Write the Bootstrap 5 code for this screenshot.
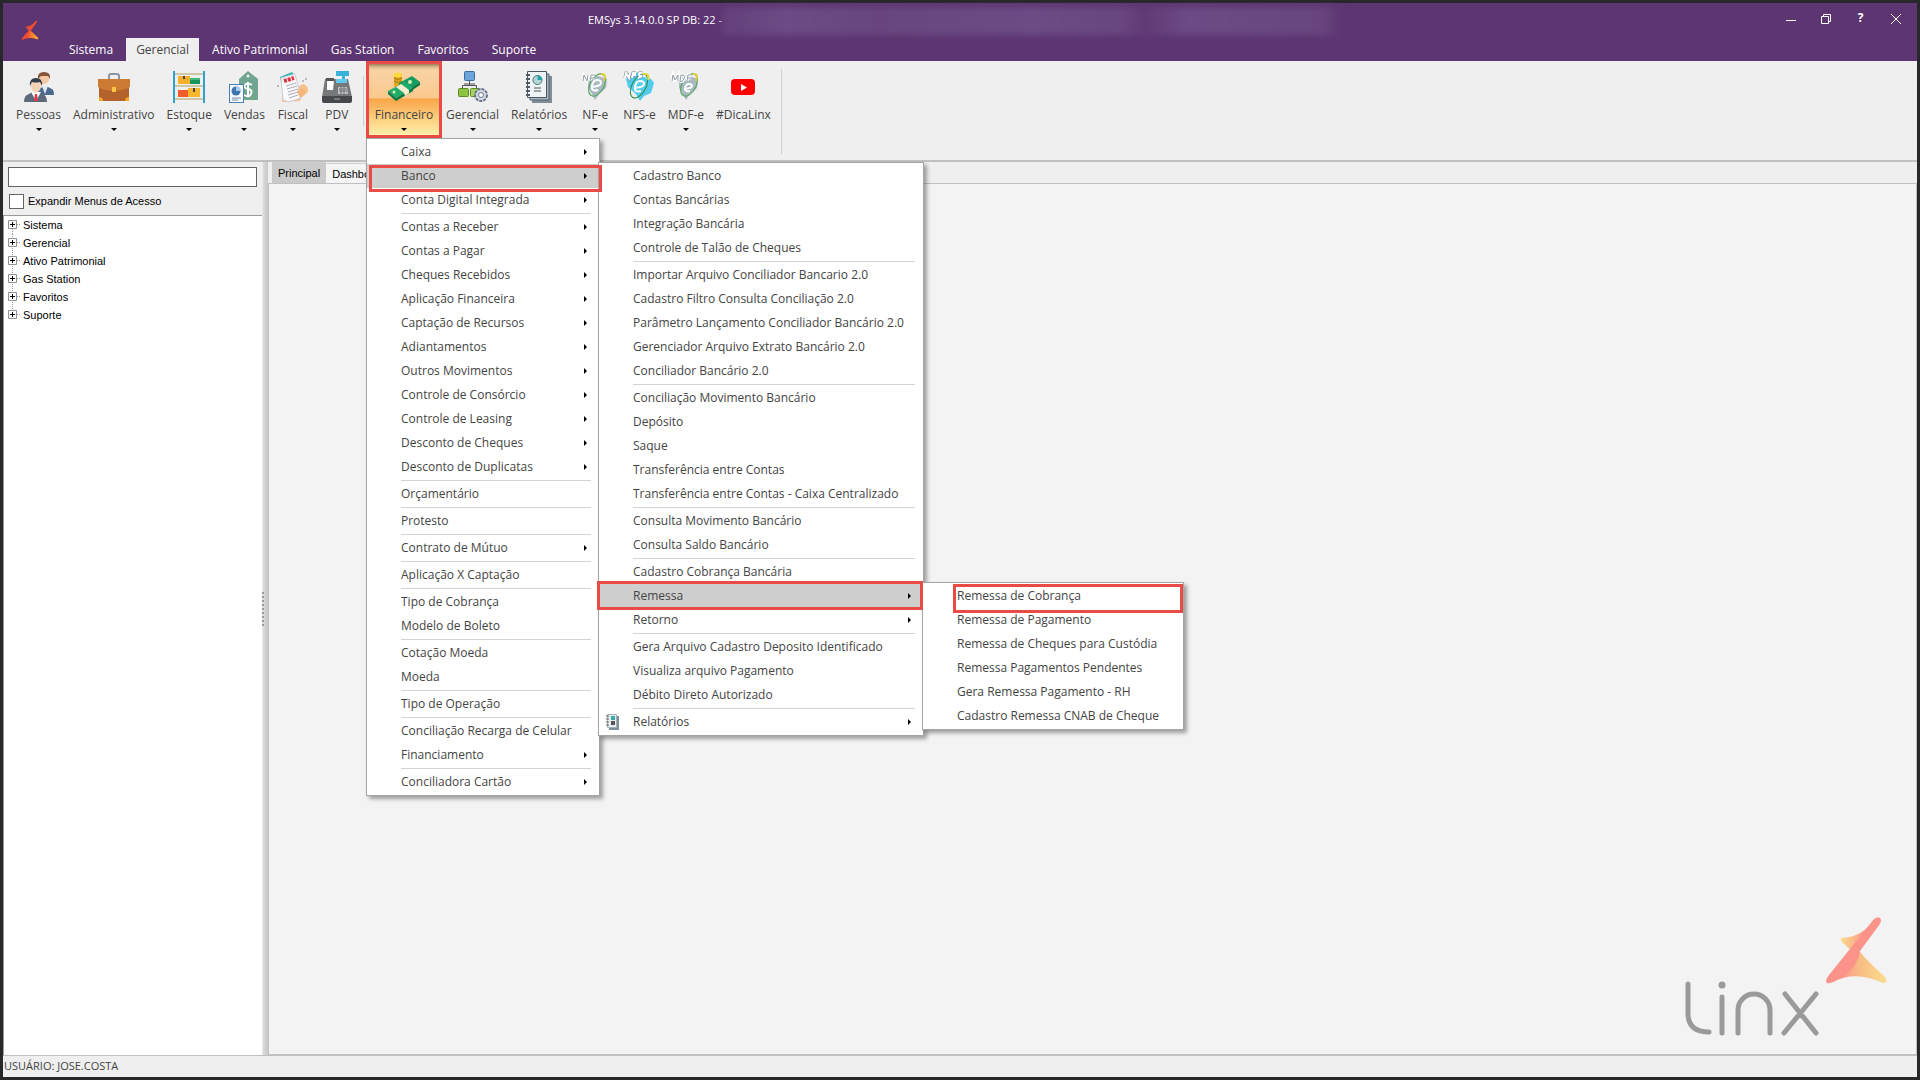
<!DOCTYPE html>
<html lang="pt-BR">
<head>
<meta charset="utf-8">
<meta name="viewport" content="width=device-width, initial-scale=1">
<title>EMSys 3.14.0.0</title>
<link href="https://cdn.jsdelivr.net/npm/bootstrap@5.3.0/dist/css/bootstrap.min.css" rel="stylesheet">
<style>
  :root { --purple: #5c3572; --ribbon: #efefef; --edge: #c0c0c0; --ink: #444; --alert: #ea4b45; }
  body { background: #262829; font-family: "Open Sans", "Noto Sans", sans-serif; font-size: 12px; line-height: 16px; color: var(--ink); padding: 3px; }
  button { font-family: inherit; }
  .app-window { background: var(--ribbon); }
  .title-area { background: var(--purple); height: 58px; color: #fff; }
  .brand-cell { width: 56px; padding: 17px 0 0 18px; }
  .title-line { height: 35px; padding-left: 529px; }
  .title-text { font-size: 11px; padding-top: 9px; }
  .blurred-name { height: 28px; width: 620px; margin-top: 4px; filter: blur(3px); background: linear-gradient(90deg, #65437d, #70508a 10%, #6b4a80 25%, #70518a 50%, #6b4a80 65%, #613c76 68%, #70508a 75%, #6b4a80 97%, #5c3572); opacity: .8; }
  .win-ctl { width: 35px; height: 32px; padding: 0 0 2px; border: 0; background: none; color: #fff; }
  .ribbon-tab { height: 23px; padding: 1px 10px 0; margin-right: 3px; border: 0; background: none; color: #fff; line-height: 22px; font-size: 12px; }
  .ribbon-tab.active { background: var(--ribbon); color: var(--ink); }
  .ribbon { height: 101px; border-bottom: 2px solid var(--edge); padding-left: 7px; }
  .tool { display: flex; flex-direction: column; align-items: center; position: relative; min-width: 40px; height: 75px; padding: 10px 6px 0; border: 0; background: none; color: var(--ink); white-space: nowrap; }
  .tool svg { margin-bottom: 4px; }
  .tool-caret::after { content: ""; margin-top: 5px; border: 3px solid transparent; border-top-color: #000; border-bottom: 0; }
  .tool-active { background: linear-gradient(#a08058 0, #d9b88c 3px, #f8d3a5 6px, #fac98d 48%, #f9a547 49%, #fcc875 72%, #fff0ac 100%); box-shadow: 0 0 0 3px var(--alert); margin: 3px 1px 0; height: 71px; padding-top: 7px; z-index: 2; }
  .tool-split { width: 1px; background: #cfcfcf; }
  .split-short { height: 50px; margin-top: 15px; }
  .split-tall { height: 85px; margin-top: 8px; }
  .side-pane { width: 259px; }
  .search-row { padding: 5px 5px 0; }
  .search-box { display: block; height: 20px; border: 1px solid #646464; border-radius: 0; padding: 0 4px; font-size: 12px; background: #fff; }
  .expand-row { padding: 6px; }
  .small-sans { font-family: "Liberation Sans", Arial, sans-serif; font-size: 11px; color: #000; }
  .expand-check { appearance: none; width: 15px; height: 15px; border: 1px solid #646464; background: #fff; margin: 0; }
  .tree { background: #fff; border-top: 1px solid #9a9a9a; border-left: 1px solid #9a9a9a; padding: 0 0 0 4px; }
  .tree-node { height: 18px; line-height: 18px; }
  .tree-node a { color: #000; text-decoration: none; }
  .splitter { width: 6px; background: linear-gradient(90deg, #efefef, #d6d6d6 30%, #c8c8c8); }
  .grip { width: 2px; height: 34px; background: repeating-linear-gradient(#999 0 2px, transparent 2px 4px); }
  .doc-tab { border: 0; padding: 0 6px; height: 20px; line-height: 16px; background: #f5f5f5; border-top: 1px solid #d0d0d0; margin-top: 1px; }
  .doc-tab.active { background: #cacaca; margin-top: 0; height: 21px; }
  .doc-area { background: #f3f3f3; border: 1px solid var(--edge); }
  .brand-art { margin: 0 28px 18px 0; }
  .status-line { height: 22px; border-top: 1px solid var(--edge); font-size: 11px; line-height: 20px; padding-left: 1px; }
  .cascade { position: absolute; background: #fff; border: 1px solid #a5a5a5; padding: 1px 0; box-shadow: 3px 3px 4px rgba(0,0,0,.35); list-style: none; margin: 0; z-index: 3; }
  .cascade .entry { display: block; position: relative; width: 100%; height: 24px; border: 0; background: none; text-align: left; padding: 0 0 0 34px; line-height: 24px; color: var(--ink); white-space: nowrap; }
  .cascade .open { background: #cecece; }
  .cascade .more::after { content: ""; position: absolute; right: 12px; top: 9px; border: 3px solid transparent; border-left-color: #000; border-right: 0; }
  .cascade .rule { height: 1px; margin: 1px 8px 1px 34px; background: #d4d4d4; }
  .cascade .entry svg { position: absolute; left: 7px; top: 4px; }
  .menu-fin { left: 366px; top: 138px; width: 234px; }
  .menu-bank { left: 598px; top: 162px; width: 326px; }
  .menu-rem { left: 922px; top: 582px; width: 262px; }
  .mark-frame { position: absolute; border: 3px solid var(--alert); z-index: 4; pointer-events: none; }
  .frame-bank { left: 369px; top: 165px; width: 233px; height: 27px; }
  .frame-rem { left: 597px; top: 581px; width: 326px; height: 29px; }
  .frame-cob { left: 953px; top: 584px; width: 230px; height: 29px; }
</style>
</head>
<body class="vh-100 overflow-hidden position-relative">
<div class="app-window h-100 d-flex flex-column">
  <header class="title-area d-flex flex-shrink-0">
    <div class="brand-cell"><svg width="18" height="20" viewBox="0 0 180 200"><defs><linearGradient id="lg1" x1="0" x2="1"><stop offset=".3" stop-color="#ee4a34"/><stop offset="1" stop-color="#fdb92a"/></linearGradient></defs><path d="M60 66Q44 62 50 78L78 104 15 180Q0 205 20 196 80 165 160 192 180 194 168 176L100 110 Z" fill="url(#lg1)"/><path d="M60 66Q100 62 150 8 168 0 160 20L100 105 20 196Q0 200 10 182L90 94Z" fill="#ee4a34"/></svg></div>
    <div class="flex-grow-1 d-flex flex-column">
      <div class="title-line d-flex">
        <span class="title-text flex-shrink-0">EMSys 3.14.0.0 SP DB: 22 -</span>
        <span class="blurred-name"></span>
        <div class="ms-auto me-1 d-flex">
          <button class="win-ctl" aria-label="Minimizar"><svg width="12" height="12"><path d="M1 7.500h10" stroke="#fff"/></svg></button>
          <button class="win-ctl" aria-label="Restaurar"><svg width="12" height="12" fill="none" stroke="#fff"><path d="M1.500 3.500h7v7h-7zM3.500 3.500v-2h7v7h-2"/></svg></button>
          <button class="win-ctl fw-bold" aria-label="Ajuda">?</button>
          <button class="win-ctl" aria-label="Fechar"><svg width="12" height="12"><path d="M1 1l10 10M11 1L1 11" stroke="#fff"/></svg></button>
        </div>
      </div>
      <nav class="d-flex">
        <button class="ribbon-tab">Sistema</button><button class="ribbon-tab active">Gerencial</button><button class="ribbon-tab">Ativo Patrimonial</button><button class="ribbon-tab">Gas Station</button><button class="ribbon-tab">Favoritos</button><button class="ribbon-tab">Suporte</button>
      </nav>
    </div>
  </header>

  <div class="ribbon d-flex flex-shrink-0 align-items-start">
    <button class="tool tool-caret"><svg width="32" height="32" viewBox="0 0 32 32"><path d="M14 24q0-7 6-8l3-1 6 3q2 1 2 6z" fill="#4c6a8d"/><path d="M19 15l3 8 3-8z" fill="#dfeaf4"/><circle cx="21" cy="8" r="5" fill="#f2c9a2"/><path d="M15 8q-1-7 6-7t6 7l-2-3h-7z" fill="#84543b"/><path d="M1 31q0-7 5-8l3-2h7l4 2q4 2 4 8z" fill="#5d6a7b"/><path d="M8 21l5 9 5-9z" fill="#fff"/><path d="M12 23h2l1 7h-4z" fill="#e13a49"/><ellipse cx="13" cy="15" rx="5" ry="6.500" fill="#f6d3b5"/><path d="M7 15q-1-8 6-8t6 8l-2-4q-5 1-8 0z" fill="#38404f"/></svg>Pessoas</button>
    <button class="tool tool-caret"><svg width="34" height="32" viewBox="0 0 34 32"><path d="M12 8V5q0-2 2-2h6q2 0 2 2v3" fill="none" stroke="#8796a5" stroke-width="2"/><rect x="2" y="9" width="30" height="21" rx="1" fill="#b2622a"/><path d="M1 8h32v8q-7 4-16 4T1 16z" fill="#cd7a32"/><rect x="15" y="16" width="4" height="5" fill="#fcc33e"/><path d="M2 26q4 0 4 4H2zM32 26q-4 0-4 4h4z" fill="#f7a823"/></svg>Administrativo</button>
    <button class="tool tool-caret"><svg width="32" height="32" viewBox="0 0 32 32"><path d="M2 2h28v2H2zM2 14h28v2H2zM2 27h28v2H2z" fill="#cfc6a6"/><path d="M0 0h2v32H0zM30 0h2v32h-2z" fill="#2fa2cf"/><path d="M5 5h6v8H5zM11 5h6v8h-6z" fill="#fbb02b"/><path d="M10 5h2v3h-2z" fill="#444"/><path d="M17 7h10v6H17z" fill="#18935a"/><path d="M17 7h10v2H17z" fill="#3eb77b"/><path d="M5 19h10v7H5z" fill="#f25d29"/><path d="M15 17h12v9H15z" fill="#fbb72c"/><path d="M20 17h2v4h-2z" fill="#444"/></svg>Estoque</button>
    <button class="tool tool-caret"><svg width="32" height="32" viewBox="0 0 32 32"><path d="M11 8l9-8 10 8v20q0 1-1 1H11z" fill="#70a58f"/><circle cx="20" cy="5" r="1.500" fill="#eef"/><path d="M24 14q-5-3-7 0t3 4 3 5-7 1M20 11v15" fill="none" stroke="#fff" stroke-width="2"/><rect x="1.500" y="13.500" width="14" height="18" fill="#f5faff" stroke="#4b80b4"/><circle cx="8" cy="20" r="4.500" fill="#3d75af"/><path d="M8 20v-5a5 5 0 0 1 5 5z" fill="#a7c9e6"/><path d="M4 27h9M4 29h6" stroke="#789"/></svg>Vendas</button>
    <button class="tool tool-caret"><svg width="32" height="32" viewBox="0 0 32 32"><path d="M3 6l12-5 4 5-12 20z" fill="#38b8ae"/><path d="M5 31l0-8 16-7 5-3q6 2 5 8l-7 6-1 3z" fill="#f7c08a"/><path d="M4 7l14-4 6 24-12 4-6-2z" fill="#fafafa" stroke="#ccd"/><path d="M7 10l10-3" stroke="#dc3345" stroke-width="4" stroke-dasharray="3 1"/><path d="M9 15l10-3M10 18l10-3M11 21l10-3M11 24l10-3M12 27l9-3" stroke="#aab"/><path d="M20 20q3-3 6-2t2 5l-5 4z" fill="#f3b57c"/><path d="M0 15h2M25 10h2M28 8h2" stroke="#888"/></svg>Fiscal</button>
    <button class="tool tool-caret"><svg width="32" height="32" viewBox="0 0 32 32"><path d="M15 0h13v5h-4v3h-3V5h-6z" fill="#39b1d8"/><path d="M4 8h23l4 18H1z" fill="#77787a"/><path d="M15 8h11v4H15z" fill="#62c9ee"/><path d="M6 9h7l-1 10H6z" fill="#fff"/><path d="M5 7h8v3H5z" fill="#555"/><path d="M17 16h9l1 7H17z" fill="#bfc2c4"/><path d="M18 18h8M18 20h8M20 16v7M23 16v7" stroke="#737577"/><path d="M1 25h30v5q0 2-2 2H3q-2 0-2-2z" fill="#47484b"/><path d="M13 28h6" stroke="#aaa"/></svg>PDV</button>
    <span class="tool-split split-short mx-1"></span>
    <button class="tool tool-caret tool-active"><svg width="34" height="32" viewBox="0 0 34 32"><path d="M7 4v11q4 3 8 0V4z" fill="#e0a51d"/><ellipse cx="11" cy="4" rx="4.500" ry="2.500" fill="#ffd83d"/><path d="M7 7q4 3 8 0M7 10q4 3 8 0" fill="none" stroke="#a77910"/><path d="M12 12L25 5l8 6-12 8z" fill="#159d61"/><path d="M12 12l9 7v3l-9-7zM33 11l-12 8v3l12-8z" fill="#087748"/><path d="M1 20l17-9 8 6-17 10z" fill="#20ad6c"/><path d="M1 20l8 7v3l-8-7zM26 17L9 27v3l17-10z" fill="#087748"/><path d="M9 16l5-3 8 6v3l-4 3-1-3z" fill="#f8edce"/><circle cx="7" cy="21" r="1.500" fill="#d8f0b5"/><circle cx="23" cy="11" r="2" fill="#d8f0b5"/></svg>Financeiro</button>
    <button class="tool tool-caret"><svg width="32" height="32" viewBox="0 0 32 32"><rect x="7.500" y=".5" width="10" height="9" rx="1" fill="#6da4dc" stroke="#3c6d9f"/><path d="M12.500 10v5M5.500 17v-2.500h14V17M7 13h11" fill="none" stroke="#555"/><rect x="1.500" y="17.500" width="10" height="8" rx="1" fill="#8bc342" stroke="#5d8d22"/><rect x="13.500" y="17.500" width="9" height="8" rx="1" fill="#a9d35f" stroke="#5d8d22"/><circle cx="24" cy="24" r="6" fill="#d5dae5" stroke="#69738a" stroke-width="2" stroke-dasharray="3 1"/><circle cx="24" cy="24" r="2.500" fill="#fff" stroke="#69738a"/></svg>Gerencial</button>
    <button class="tool tool-caret"><svg width="32" height="32" viewBox="0 0 32 32"><path d="M9 5h20v27H9z" fill="#7f8e99"/><path d="M7 3h19v26H7z" fill="#a8b5bf" stroke="#52606b"/><path d="M4.500.5h19v26h-19z" fill="#edf2f5" stroke="#4b565e"/><circle cx="14.500" cy="9" r="4.500" fill="#b8d6d4" stroke="#44777b"/><path d="M14.500 9V4.500A4.500 4.500 0 0 1 19 9z" fill="#1ea3ab"/><path d="M11 17h7M11 20h7" stroke="#555"/><path d="M3 4h4M3 8h4M3 12h4M3 16h4M3 20h4M3 24h4" stroke="#4f5a62" stroke-width="2"/></svg>Relatórios</button>
    <button class="tool tool-caret"><svg width="32" height="32" viewBox="0 0 32 32"><path d="M9 9l7-5 12 4-1 9-7 6-4 6-3-6-4-6z" fill="#a9b9c2"/><ellipse cx="18" cy="14" rx="7" ry="12" transform="rotate(28 18 14)" fill="none" stroke="#4ca34b"/><path d="M22 3q6-1 3 7" fill="none" stroke="#e2ce3b" stroke-width="2"/><path d="M13 16q9-1 9-4t-4-3-5 6 6 4" fill="none" stroke="#fff" stroke-width="2"/><path d="M4 10l1-6 3 6 1-6M11 10l1-6h4M12 7h3" fill="none" stroke="#fff" stroke-width="3"/><path d="M4 10l1-6 3 6 1-6M11 10l1-6h4M12 7h3" fill="none" stroke="#8e9ba5"/></svg>NF-e</button>
    <button class="tool tool-caret"><svg width="32" height="32" viewBox="0 0 32 32"><path d="M3 8L14 1l6 5 8 2 3 4-3 10-7 3-4 5-4-7-8-7z" fill="#52cbed"/><ellipse cx="16" cy="15" rx="7" ry="13" transform="rotate(28 16 15)" fill="none" stroke="#268a42"/><path d="M20 3q7-1 5 6" fill="none" stroke="#e2db3b" stroke-width="2"/><path d="M12 17q9-1 9-4t-4-3-5 6 6 4" fill="none" stroke="#fff" stroke-width="2"/><path d="M2 7l1-5 3 5 1-5M9 7l1-5h3M10 4h3M19 2q-3-1-3 1t2 2-3 2" fill="none" stroke="#789" stroke-width="3"/><path d="M2 7l1-5 3 5 1-5M9 7l1-5h3M10 4h3M19 2q-3-1-3 1t2 2-3 2" fill="none" stroke="#fff" stroke-width="2"/></svg>NFS-e</button>
    <button class="tool tool-caret"><svg width="32" height="32" viewBox="0 0 32 32"><path d="M9 9l7-5 12 4-1 9-7 6-4 6-3-6-4-6z" fill="#a9b9c2"/><ellipse cx="19" cy="14" rx="7" ry="12" transform="rotate(28 19 14)" fill="none" stroke="#4ca34b"/><path d="M23 3q6-1 3 7" fill="none" stroke="#e2ce3b" stroke-width="2"/><path d="M15 18q7-1 7-3t-3-2-4 4 5 3" fill="none" stroke="#fff" stroke-width="2"/><path d="M2 10l1-6 2 5 3-5v6M10 10l1-6q5 0 3 4t-4 2M17 10l1-6h3M18 7h3" fill="none" stroke="#fff" stroke-width="3"/><path d="M2 10l1-6 2 5 3-5v6M10 10l1-6q5 0 3 4t-4 2M17 10l1-6h3M18 7h3" fill="none" stroke="#8e9ba5"/></svg>MDF-e</button>
    <button class="tool"><svg width="32" height="32" viewBox="0 0 32 32"><rect x="4" y="8" width="24" height="16" rx="4" fill="#f00"/><path d="M14 13l6 3.500-6 3.500z" fill="#fff"/></svg>#DicaLinx</button>
    <span class="tool-split split-tall ms-1"></span>
  </div>

  <main class="flex-grow-1 d-flex">
    <aside class="side-pane d-flex flex-column flex-shrink-0">
      <div class="search-row"><input class="search-box w-100" aria-label="Buscar"></div>
      <div class="expand-row d-flex align-items-center small-sans"><input type="checkbox" class="expand-check" id="expandir"><label for="expandir" class="ms-1">Expandir Menus de Acesso</label></div>
      <div class="tree small-sans flex-grow-1">
        <div class="tree-node d-flex"><svg width="15" height="18" fill="none"><path d="M4.500 13v5M9 8.500h4" stroke="#999" stroke-dasharray="1 1"/><path d="M.5 4.500h8v8h-8z" stroke="#919191"/><path d="M2 8.500h5M4.500 6v5" stroke="#000"/></svg><a href="#">Sistema</a></div>
        <div class="tree-node d-flex"><svg width="15" height="18" fill="none"><path d="M4.500 0v18M9 8.500h4" stroke="#999" stroke-dasharray="1 1"/><path d="M.5 4.500h8v8h-8z" stroke="#919191" fill="#fff"/><path d="M2 8.500h5M4.500 6v5" stroke="#000"/></svg><a href="#">Gerencial</a></div>
        <div class="tree-node d-flex"><svg width="15" height="18" fill="none"><path d="M4.500 0v18M9 8.500h4" stroke="#999" stroke-dasharray="1 1"/><path d="M.5 4.500h8v8h-8z" stroke="#919191" fill="#fff"/><path d="M2 8.500h5M4.500 6v5" stroke="#000"/></svg><a href="#">Ativo Patrimonial</a></div>
        <div class="tree-node d-flex"><svg width="15" height="18" fill="none"><path d="M4.500 0v18M9 8.500h4" stroke="#999" stroke-dasharray="1 1"/><path d="M.5 4.500h8v8h-8z" stroke="#919191" fill="#fff"/><path d="M2 8.500h5M4.500 6v5" stroke="#000"/></svg><a href="#">Gas Station</a></div>
        <div class="tree-node d-flex"><svg width="15" height="18" fill="none"><path d="M4.500 0v18M9 8.500h4" stroke="#999" stroke-dasharray="1 1"/><path d="M.5 4.500h8v8h-8z" stroke="#919191" fill="#fff"/><path d="M2 8.500h5M4.500 6v5" stroke="#000"/></svg><a href="#">Favoritos</a></div>
        <div class="tree-node d-flex"><svg width="15" height="18" fill="none"><path d="M4.500 0v5M9 8.500h4" stroke="#999" stroke-dasharray="1 1"/><path d="M.5 4.500h8v8h-8z" stroke="#919191" fill="#fff"/><path d="M2 8.500h5M4.500 6v5" stroke="#000"/></svg><a href="#">Suporte</a></div>
      </div>
    </aside>
    <div class="splitter flex-shrink-0 d-flex align-items-center ps-0"><span class="grip"></span></div>
    <section class="flex-grow-1 d-flex flex-column">
      <div class="d-flex small-sans ps-1"><button class="doc-tab active">Principal</button><button class="doc-tab">Dashboard</button></div>
      <div class="doc-area flex-grow-1 d-flex align-items-end justify-content-end">
        <svg width="204" height="120" viewBox="0 0 204 120" class="brand-art" role="img" aria-label="Linx"><defs><linearGradient id="lg2" x1="0" x2="1"><stop offset=".2" stop-color="#fb938b"/><stop offset=".5" stop-color="#f8bb85"/><stop offset="1" stop-color="#fbdc8c"/></linearGradient><linearGradient id="lg3" x1="0" x2="1"><stop offset="0" stop-color="#fbdc88"/><stop offset=".7" stop-color="#fb998c"/></linearGradient></defs>
          <g fill="none" stroke="#9a9a9a" stroke-width="5" stroke-linecap="round"><path d="M4 68v31q1 17 21 17M38 81v36M54 117V94a16 16 0 0 1 32 0v23M101 78l31 39M132 78l-32 39"/></g><circle cx="38" cy="69" r="3.500" fill="#9a9a9a"/>
          <path d="M146 66L174 33q4 7 27 28 4 6-2 6-28-13-50-1z" fill="url(#lg2)"/><path d="M158 22q18-1 30-15l2 4-20 26-11-10q-4-5-1-5z" fill="url(#lg3)"/><path d="M190 3q6-4 7 1 0 3-4 8L176 35q-3 20-27 31-7 3-7-1 0-2 3-6z" fill="#fb938b"/></svg>
      </div>
    </section>
  </main>
  <footer class="status-line flex-shrink-0">USUÁRIO: JOSE.COSTA</footer>
</div>

<div class="cascade menu-fin">
  <button class="entry more">Caixa</button><button class="entry more open">Banco</button><button class="entry more">Conta Digital Integrada</button>
  <div class="rule"></div>
  <button class="entry more">Contas a Receber</button><button class="entry more">Contas a Pagar</button><button class="entry more">Cheques Recebidos</button><button class="entry more">Aplicação Financeira</button><button class="entry more">Captação de Recursos</button><button class="entry more">Adiantamentos</button><button class="entry more">Outros Movimentos</button><button class="entry more">Controle de Consórcio</button><button class="entry more">Controle de Leasing</button><button class="entry more">Desconto de Cheques</button><button class="entry more">Desconto de Duplicatas</button>
  <div class="rule"></div><button class="entry">Orçamentário</button>
  <div class="rule"></div><button class="entry">Protesto</button>
  <div class="rule"></div><button class="entry more">Contrato de Mútuo</button>
  <div class="rule"></div><button class="entry">Aplicação X Captação</button>
  <div class="rule"></div><button class="entry">Tipo de Cobrança</button><button class="entry">Modelo de Boleto</button>
  <div class="rule"></div><button class="entry">Cotação Moeda</button><button class="entry">Moeda</button>
  <div class="rule"></div><button class="entry">Tipo de Operação</button>
  <div class="rule"></div><button class="entry">Conciliação Recarga de Celular</button><button class="entry more">Financiamento</button>
  <div class="rule"></div><button class="entry more">Conciliadora Cartão</button>
</div>
<div class="cascade menu-bank">
  <button class="entry">Cadastro Banco</button><button class="entry">Contas Bancárias</button><button class="entry">Integração Bancária</button><button class="entry">Controle de Talão de Cheques</button>
  <div class="rule"></div>
  <button class="entry">Importar Arquivo Conciliador Bancario 2.0</button><button class="entry">Cadastro Filtro Consulta Conciliação 2.0</button><button class="entry">Parâmetro Lançamento Conciliador Bancário 2.0</button><button class="entry">Gerenciador Arquivo Extrato Bancário 2.0</button><button class="entry">Conciliador Bancário 2.0</button>
  <div class="rule"></div>
  <button class="entry">Conciliação Movimento Bancário</button><button class="entry">Depósito</button><button class="entry">Saque</button><button class="entry">Transferência entre Contas</button><button class="entry">Transferência entre Contas - Caixa Centralizado</button>
  <div class="rule"></div>
  <button class="entry">Consulta Movimento Bancário</button><button class="entry">Consulta Saldo Bancário</button>
  <div class="rule"></div>
  <button class="entry">Cadastro Cobrança Bancária</button><button class="entry more open">Remessa</button><button class="entry more">Retorno</button>
  <div class="rule"></div>
  <button class="entry">Gera Arquivo Cadastro Deposito Identificado</button><button class="entry">Visualiza arquivo Pagamento</button><button class="entry">Débito Direto Autorizado</button>
  <div class="rule"></div>
  <button class="entry more"><svg width="14" height="16" viewBox="0 0 14 16"><path d="M3 2h10v14H3z" fill="#7f8e99"/><path d="M1.500.5h9v13h-9z" fill="#e4edf0" stroke="#a5b0b7"/><path d="M5 2h4v4H5z" fill="#3aa6ad"/><path d="M5 7h4v4H5z" fill="#555"/><path d="M0 2h3M0 5h3M0 8h3M0 11h3" stroke="#666"/></svg>Relatórios</button>
</div>
<div class="cascade menu-rem">
  <button class="entry">Remessa de Cobrança</button><button class="entry">Remessa de Pagamento</button><button class="entry">Remessa de Cheques para Custódia</button><button class="entry">Remessa Pagamentos Pendentes</button><button class="entry">Gera Remessa Pagamento - RH</button><button class="entry">Cadastro Remessa CNAB de Cheque</button>
</div>
<div class="mark-frame frame-bank"></div><div class="mark-frame frame-rem"></div><div class="mark-frame frame-cob"></div>
<script src="https://cdn.jsdelivr.net/npm/bootstrap@5.3.0/dist/js/bootstrap.bundle.min.js"></script>
</body>
</html>
